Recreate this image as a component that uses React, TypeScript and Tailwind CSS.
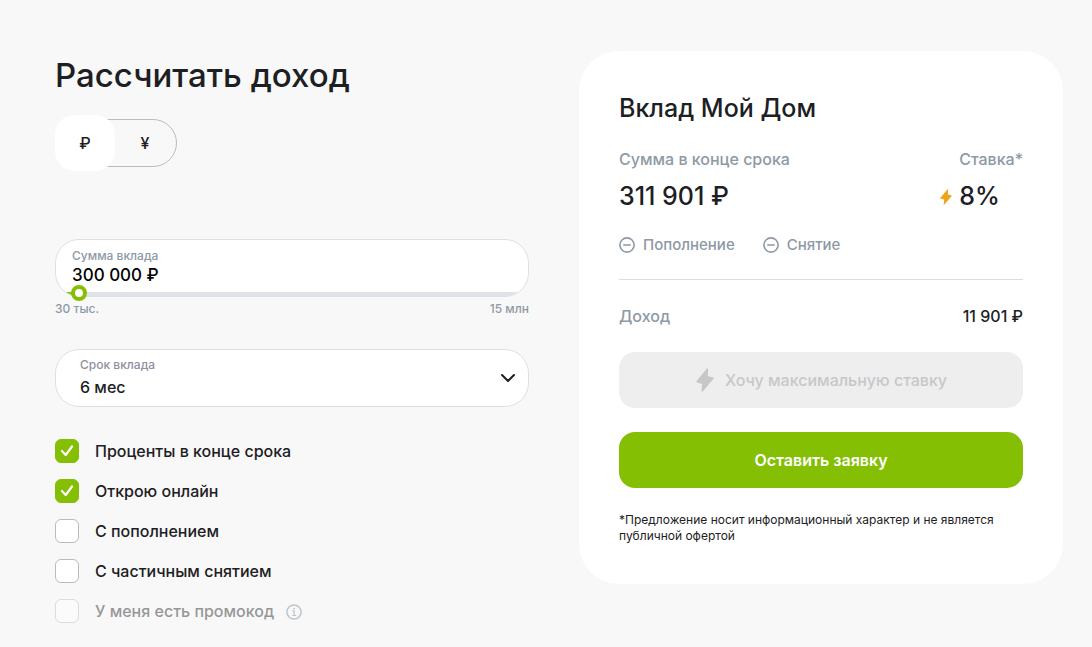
import { useState } from 'react';
import clsx from 'clsx';

const MIN_AMOUNT = 30000;
const MAX_AMOUNT = 15000000;

const CURRENCIES = [
  { id: 'rub', sign: '₽', label: 'Рубли' },
  { id: 'cny', sign: '¥', label: 'Юани' },
];

const TERMS = ['3 мес', '6 мес', '12 мес', '24 мес'];

interface Option {
  id: string;
  label: string;
  checked: boolean;
  disabled?: boolean;
}

const INITIAL_OPTIONS: Option[] = [
  { id: 'end', label: 'Проценты в конце срока', checked: true },
  { id: 'online', label: 'Открою онлайн', checked: true },
  { id: 'topup', label: 'С пополнением', checked: false },
  { id: 'withdraw', label: 'С частичным снятием', checked: false },
  { id: 'promo', label: 'У меня есть промокод', checked: false, disabled: true },
];

const formatAmount = (value: number): string =>
  `${String(value).replace(/\B(?=(\d{3})+(?!\d))/g, ' ')} ₽`;

function BoltIcon({ className }: { className?: string }) {
  return (
    <svg viewBox="0 0 18 24" className={className} fill="currentColor" aria-hidden="true">
      <path
        d="M11.4 1 1 13.8l5.9 1.4L6.2 23 17 10.2l-5.9-1.4z"
        stroke="currentColor"
        strokeWidth="1.4"
        strokeLinejoin="round"
      />
    </svg>
  );
}

function MinusCircleIcon() {
  return (
    <svg viewBox="0 0 16 16" className="size-4" fill="none" stroke="currentColor" strokeWidth="1.6" aria-hidden="true">
      <circle cx="8" cy="8" r="7.1" />
      <path d="M4.8 8h6.4" strokeLinecap="round" />
    </svg>
  );
}

function InfoIcon() {
  return (
    <svg viewBox="0 0 16 16" className="size-4" fill="none" stroke="currentColor" strokeWidth="1.5" aria-hidden="true">
      <circle cx="8" cy="8" r="7.1" />
      <path d="M6.4 7.1h1.8v4.3M6.2 11.5h4" strokeWidth="1.2" />
      <circle cx="8" cy="4.7" r="0.9" fill="currentColor" stroke="none" />
    </svg>
  );
}

function CurrencySwitch() {
  const [currency, setCurrency] = useState('rub');

  return (
    <div className="flex h-14 items-center">
      <div className="flex h-12 w-[122px] items-center rounded-3xl border border-[#babbc9]">
        {CURRENCIES.map((item) => (
          <button
            key={item.id}
            type="button"
            aria-label={item.label}
            aria-pressed={currency === item.id}
            onClick={() => setCurrency(item.id)}
            className={clsx(
              'h-14 w-[60px] shrink-0 rounded-[20px] text-base font-medium first:-ml-px',
              currency === item.id && 'bg-white'
            )}
          >
            {item.sign}
          </button>
        ))}
      </div>
    </div>
  );
}

function AmountField() {
  const [amount, setAmount] = useState(300000);
  const share = (amount - MIN_AMOUNT) / (MAX_AMOUNT - MIN_AMOUNT);

  return (
    <div>
      <div className="relative">
        <div className="relative h-[58px] overflow-hidden rounded-3xl border border-[#dfe0e4] bg-white px-4 pt-2">
          <label htmlFor="amount" className="block text-xs leading-4 font-medium text-[#8d99a5]">
            Сумма вклада
          </label>
          <input
            id="amount"
            type="text"
            inputMode="numeric"
            value={formatAmount(amount)}
            onChange={(e) => setAmount(Number(e.target.value.replace(/\D/g, '')))}
            className="block h-6 w-full bg-transparent text-[17px] font-medium text-black outline-none"
          />
          <div className="absolute inset-x-0 bottom-0 h-1 bg-[#dfe3e7]">
            <div className="h-full bg-[#84bf04]" style={{ width: `calc(16px + ${share} * (100% - 32px))` }} />
          </div>
        </div>
        <input
          type="range"
          aria-label="Сумма вклада"
          min={MIN_AMOUNT}
          max={MAX_AMOUNT}
          value={amount}
          onChange={(e) => setAmount(Number(e.target.value))}
          className="absolute inset-x-2 -bottom-1 h-4 cursor-pointer appearance-none bg-transparent outline-none [&::-webkit-slider-thumb]:size-4 [&::-webkit-slider-thumb]:appearance-none [&::-webkit-slider-thumb]:rounded-full [&::-webkit-slider-thumb]:border-4 [&::-webkit-slider-thumb]:border-[#84bf04] [&::-webkit-slider-thumb]:bg-white"
        />
      </div>
      <div className="mt-1 flex justify-between text-xs leading-4 font-medium text-[#8d99a5]">
        <span>30 тыс.</span>
        <span>15 млн</span>
      </div>
    </div>
  );
}

function TermField() {
  const [term, setTerm] = useState('6 мес');

  return (
    <div className="relative">
      <label
        htmlFor="term"
        className="pointer-events-none absolute top-2 left-[25px] text-xs leading-4 font-medium text-[#8e8fa0]"
      >
        Срок вклада
      </label>
      <select
        id="term"
        value={term}
        onChange={(e) => setTerm(e.target.value)}
        className="block h-[58px] w-full appearance-none rounded-3xl border border-[#dfe0e4] bg-white px-6 pt-[18px] text-base font-medium outline-none"
      >
        {TERMS.map((item) => (
          <option key={item}>{item}</option>
        ))}
      </select>
      <svg
        viewBox="0 0 14 8"
        className="pointer-events-none absolute top-[25px] right-3.5 h-2 w-3.5"
        fill="none"
        stroke="currentColor"
        strokeWidth="2"
        strokeLinecap="round"
        strokeLinejoin="round"
        aria-hidden="true"
      >
        <path d="m1 1 6 6 6-6" />
      </svg>
    </div>
  );
}

interface OptionRowProps {
  option: Option;
  onToggle: (id: string) => void;
}

function OptionRow({ option, onToggle }: OptionRowProps) {
  return (
    <div className="flex items-center gap-3">
      <label
        className={clsx(
          'flex items-center gap-4 text-base leading-6 font-medium',
          option.disabled && 'opacity-45'
        )}
      >
        <span className="grid size-6 shrink-0">
          <input
            type="checkbox"
            checked={option.checked}
            disabled={option.disabled}
            onChange={() => onToggle(option.id)}
            className="col-start-1 row-start-1 size-6 appearance-none rounded-md border border-[#babbc2] bg-white checked:border-[#84bf04] checked:bg-[#84bf04]"
          />
          {option.checked && (
            <svg
              viewBox="0 0 24 24"
              className="pointer-events-none col-start-1 row-start-1 size-6"
              fill="none"
              stroke="white"
              strokeWidth="2.2"
              strokeLinecap="round"
              strokeLinejoin="round"
              aria-hidden="true"
            >
              <path d="m7 12 3.7 4L17 7.5" />
            </svg>
          )}
        </span>
        {option.label}
      </label>
      {option.disabled && (
        <button type="button" aria-label="Подробнее о промокоде" className="pt-0.5 text-[#bfc3cc]">
          <InfoIcon />
        </button>
      )}
    </div>
  );
}

function DepositCard() {
  return (
    <section className="rounded-[40px] bg-white p-10">
      <h2 className="text-[25px] leading-[34px] font-medium">Вклад Мой Дом</h2>

      <div className="mt-[22px] flex justify-between">
        <div>
          <p className="text-base leading-6 font-medium text-[#8d99a5]">Сумма в конце срока</p>
          <p className="mt-2 text-[25px] leading-[34px] font-medium">311 901 ₽</p>
        </div>
        <div>
          <p className="text-base leading-6 font-medium text-[#8d99a5]">Ставка*</p>
          <p className="relative mt-2 text-[25px] leading-[34px] font-medium">
            <BoltIcon className="absolute top-2.5 -left-5 h-4 w-3.5 text-[#eda31b]" />
            8%
          </p>
        </div>
      </div>

      <ul className="mt-5 flex gap-7 text-[15px] leading-6 font-medium text-[#8d99a5]">
        <li className="flex items-center gap-2">
          <MinusCircleIcon />
          Пополнение
        </li>
        <li className="flex items-center gap-2">
          <MinusCircleIcon />
          Снятие
        </li>
      </ul>

      <div className="mt-[22px] flex justify-between border-t border-[#dcdddf] pt-6 text-base leading-6 font-medium">
        <span className="text-[#8d99a5]">Доход</span>
        <span>11 901 ₽</span>
      </div>

      <button
        type="button"
        disabled
        className="mt-6 flex h-14 w-full items-center justify-center gap-2.5 rounded-2xl bg-[#eeeeee] text-base font-medium text-[#c7c7ca]"
      >
        <BoltIcon className="h-6 w-5" />
        Хочу максимальную ставку
      </button>
      <button
        type="button"
        className="mt-6 h-14 w-full rounded-2xl bg-[#84bf04] text-base font-semibold text-white"
      >
        Оставить заявку
      </button>

      <p className="mt-6 text-xs leading-4">
        *Предложение носит информационный характер и не является публичной офертой
      </p>
    </section>
  );
}

export default function App() {
  const [options, setOptions] = useState(INITIAL_OPTIONS);

  const toggleOption = (id: string) => {
    setOptions((prev) => prev.map((o) => (o.id === id ? { ...o, checked: !o.checked } : o)));
  };

  return (
    <main className="grid min-h-screen grid-cols-[474fr_484fr] items-start gap-[50px] bg-[#f8f8f8] pt-[51px] pr-[29px] pb-6 pl-[55px] font-['Inter','Liberation_Sans',sans-serif] text-[#1d2023]">
      <form onSubmit={(e) => e.preventDefault()}>
        <h1 className="text-[33px] leading-12 font-medium">Рассчитать доход</h1>
        <div className="mt-4">
          <CurrencySwitch />
        </div>
        <div className="mt-[68px]">
          <AmountField />
        </div>
        <div className="mt-8">
          <TermField />
        </div>
        <div className="mt-8 flex flex-col gap-4">
          {options.map((option) => (
            <OptionRow key={option.id} option={option} onToggle={toggleOption} />
          ))}
        </div>
      </form>
      <DepositCard />
    </main>
  );
}
